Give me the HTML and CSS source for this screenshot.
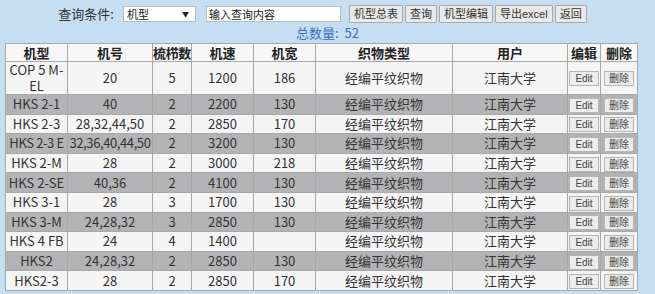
FILE: index.html
```html
<!DOCTYPE html>
<html lang="zh-CN">

<head>
    <meta charset="UTF-8">
    <title>机型查询</title>
    <link rel="stylesheet" href="styles.css">
</head>

<body>
    <div class="search">
        <span class="label">查询条件:</span>
        <div class="select">机型<span class="arrow">▼</span></div>
        <div class="input">输入查询内容</div>
        <button class="btn first">机型总表</button>
        <button class="btn">查询</button>
        <button class="btn">机型编辑</button>
        <button class="btn">导出excel</button>
        <button class="btn">返回</button>
    </div>
    <div class="total">总数量:&nbsp;&nbsp;52</div>

    <table class="list">
        <colgroup>
            <col style="width:62px">
            <col style="width:85px">
            <col style="width:39px">
            <col style="width:62px">
            <col style="width:62px">
            <col style="width:137px">
            <col style="width:115px">
            <col style="width:33px">
            <col style="width:37px">
        </colgroup>
        <thead>
            <tr>
                <th>机型</th>
                <th>机号</th>
                <th class="tight">梳栉数</th>
                <th>机速</th>
                <th>机宽</th>
                <th>织物类型</th>
                <th>用户</th>
                <th>编辑</th>
                <th>删除</th>
            </tr>
        </thead>
        <tbody>
            <tr><td>COP 5 M-EL</td><td>20</td><td>5</td><td>1200</td><td>186</td><td>经编平纹织物</td><td>江南大学</td><td><button class="op">Edit</button></td><td><button class="op">删除</button></td></tr>
            <tr><td>HKS 2-1</td><td>40</td><td>2</td><td>2200</td><td>130</td><td>经编平纹织物</td><td>江南大学</td><td><button class="op">Edit</button></td><td><button class="op">删除</button></td></tr>
            <tr><td>HKS 2-3</td><td>28,32,44,50</td><td>2</td><td>2850</td><td>170</td><td>经编平纹织物</td><td>江南大学</td><td><button class="op">Edit</button></td><td><button class="op">删除</button></td></tr>
            <tr><td class="tight">HKS 2-3 E</td><td class="tight">32,36,40,44,50</td><td>2</td><td>3200</td><td>130</td><td>经编平纹织物</td><td>江南大学</td><td><button class="op">Edit</button></td><td><button class="op">删除</button></td></tr>
            <tr><td>HKS 2-M</td><td>28</td><td>2</td><td>3000</td><td>218</td><td>经编平纹织物</td><td>江南大学</td><td><button class="op">Edit</button></td><td><button class="op">删除</button></td></tr>
            <tr><td>HKS 2-SE</td><td>40,36</td><td>2</td><td>4100</td><td>130</td><td>经编平纹织物</td><td>江南大学</td><td><button class="op">Edit</button></td><td><button class="op">删除</button></td></tr>
            <tr><td>HKS 3-1</td><td>28</td><td>3</td><td>1700</td><td>130</td><td>经编平纹织物</td><td>江南大学</td><td><button class="op">Edit</button></td><td><button class="op">删除</button></td></tr>
            <tr><td>HKS 3-M</td><td>24,28,32</td><td>3</td><td>2850</td><td>130</td><td>经编平纹织物</td><td>江南大学</td><td><button class="op">Edit</button></td><td><button class="op">删除</button></td></tr>
            <tr><td>HKS 4 FB</td><td>24</td><td>4</td><td>1400</td><td></td><td>经编平纹织物</td><td>江南大学</td><td><button class="op">Edit</button></td><td><button class="op">删除</button></td></tr>
            <tr><td>HKS2</td><td>24,28,32</td><td>2</td><td>2850</td><td>130</td><td>经编平纹织物</td><td>江南大学</td><td><button class="op">Edit</button></td><td><button class="op">删除</button></td></tr>
            <tr><td>HKS2-3</td><td>28</td><td>2</td><td>2850</td><td>170</td><td>经编平纹织物</td><td>江南大学</td><td><button class="op">Edit</button></td><td><button class="op">删除</button></td></tr>
        </tbody>
    </table>
</body>

</html>
```

FILE: styles.css
```css
* {
    margin: 0;
    padding: 0;
    box-sizing: border-box;
}

body {
    background: #c5def2;
    font-family: "Noto Sans CJK SC", sans-serif;
    color: #333;
    overflow: hidden;
}

.search {
    display: flex;
    align-items: center;
    justify-content: center;
    padding-top: 4px;
    height: 23px;
    padding-right: 10px;
}

.search .label {
    font-size: 13px;
    color: #333;
    margin-right: 9px;
}

.select {
    width: 73px;
    height: 16px;
    background: #fff;
    border: 1px solid #bbb;
    font-size: 11px;
    line-height: 14px;
    padding-left: 3px;
    position: relative;
    color: #222;
}

.select .arrow {
    position: absolute;
    right: 6px;
    top: 0;
    font-size: 7px;
}

.input {
    width: 135px;
    height: 16px;
    margin-left: 10px;
    background: #fff;
    border: 1px solid #bbb;
    font-size: 11px;
    line-height: 14px;
    padding-left: 2px;
    color: #222;
}

.btn {
    height: 18px;
    margin-left: 2px;
    padding: 0 4px;
    background: #e9e9e9;
    border: 1px solid #aaa;
    border-radius: 1px;
    font-family: "Liberation Sans", "Noto Sans CJK SC", sans-serif;
    font-size: 11px;
    line-height: 16px;
    color: #333;
}

.btn.first {
    margin-left: 8px;
}

.total {
    text-align: center;
    font-size: 13px;
    color: #3b6fbf;
    height: 20px;
    line-height: 20px;
}

.list {
    margin-left: 5px;
    width: 632px;
    table-layout: fixed;
    border-collapse: collapse;
    border: 1px solid #999;
    font-size: 13px;
}

.list tr {
    height: 19.6px;
}

.list th,
.list td {
    border: 1px solid #a8a8a8;
    text-align: center;
    line-height: 16px;
    padding: 0;
}

.list th {
    background: #f7f7f7;
    font-weight: bold;
    color: #222;
}

.list thead tr {
    height: 18px;
}

.list .tight {
    letter-spacing: -0.4px;
    white-space: nowrap;
}

.list tbody tr:nth-child(odd) {
    background: #f5f5f5;
}

.list tbody tr:nth-child(even) {
    background: #b3b3b5;
}

.op {
    width: 30px;
    height: 15px;
    background: #ececec;
    border: 1px solid #b4b4b4;
    font-family: "Liberation Sans", "Noto Sans CJK SC", sans-serif;
    font-size: 10px;
    line-height: 13px;
    color: #444;
    vertical-align: middle;
}
```
